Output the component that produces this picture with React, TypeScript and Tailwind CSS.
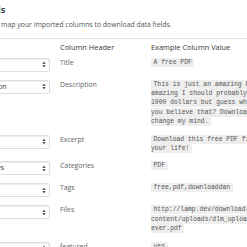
import type { ReactNode } from 'react';

type Row = {
    field: string;
    header: string;
    sample: string[];
};

const rows: Row[] = [
    { field: 'Title', header: 'Title', sample: ['A free PDF'] },
    {
        field: 'Description',
        header: 'Description',
        sample: [
            "This is just an amazing Free PDF, it's so",
            'amazing I should probably charge like',
            "1000 dollars but guess what, it's free! Can",
            'you believe that? Download it before I',
            'change my mind.',
        ],
    },
    { field: 'Excerpt', header: 'Excerpt', sample: ['Download this free PDF file and it will change', 'your life!'] },
    { field: 'Categories', header: 'Categories', sample: ['PDF'] },
    { field: 'Tags', header: 'Tags', sample: ['free,pdf,downloaddan'] },
    {
        field: 'Files',
        header: 'Files',
        sample: ['http://lamp.dev/download-monitor/wp-', 'content/uploads/dlm_uploads/2016/11/what', 'ever.pdf'],
    },
    { field: 'Featured', header: 'featured', sample: ['yes'] },
];

const Arrows = () => (
    <svg width="4" height="7" viewBox="0 0 4 7" className="shrink-0">
        <path d="M0.3 3 L2 0.6 L3.7 3 Z" fill="#555" />
        <path d="M0.3 4 L2 6.4 L3.7 4 Z" fill="#555" />
    </svg>
);

const FieldSelect = ({ value }: { value: string }) => (
    <div className="ml-auto flex h-[14px] w-[85px] items-center justify-between rounded-[2px] border border-[#ddd] bg-white pl-[4px] pr-[3px] text-[6.9px] leading-[12px] text-[#32373c] shadow-[inset_0_1px_1px_rgba(0,0,0,0.07)]">
        <span className="whitespace-nowrap">{value}</span>
        <Arrows />
    </div>
);

const Sample = ({ lines }: { lines: string[] }) => {
    const parts: ReactNode[] = [];
    lines.forEach((line, i) => {
        if (i > 0) parts.push(<br key={'br' + i} />);
        parts.push(line);
    });
    return (
        <div className="whitespace-nowrap font-['Liberation_Mono',monospace] text-[6.4px] leading-[9.4px] text-[#555]">
            <code className="bg-[#eeeeee] px-[2.5px] py-[1px] font-['Liberation_Mono',monospace]">{parts}</code>
        </div>
    );
};

export default function App() {
    return (
        <div className="h-[247px] w-[247px] overflow-hidden bg-white font-['Open_Sans',sans-serif]">
            <div className="-ml-[60px] w-[560px]">
                {/* Page title, clipped on the left */}
                <h2 className="mt-[4px] whitespace-nowrap pl-[16px] text-[9.6px] font-semibold leading-[12px] text-[#23282d]">
                    Map Fields
                </h2>
                <p className="mt-[3.5px] whitespace-nowrap pl-[9px] text-[6.9px] leading-[10px] text-[#555]">
                    The dropdowns map your imported columns to download data fields.
                </p>

                <table className="mt-[8.5px] w-[560px] table-fixed border-t border-[#e1e1e1]">
                    <colgroup>
                        <col className="w-[115px]" />
                        <col className="w-[91px]" />
                        <col />
                    </colgroup>
                    <thead>
                        <tr>
                            <th className="pb-[1.5px] pt-[3px]" />
                            <th className="pb-[1.5px] pl-[5px] pt-[3px] text-left text-[7.4px] font-normal leading-[10px] text-[#32373c]">
                                Column Header
                            </th>
                            <th className="pb-[1.5px] pl-[5px] pt-[3px] text-left text-[7.4px] font-normal leading-[10px] text-[#32373c]">
                                Example Column Value
                            </th>
                        </tr>
                    </thead>
                    <tbody>
                        {rows.map((row) => (
                            <tr key={row.header}>
                                <td className="py-[4px] pr-[5px] align-top">
                                    <FieldSelect value={row.field} />
                                </td>
                                <td className="py-[4px] pl-[5px] align-top text-[6.9px] leading-[9.4px] text-[#666]">
                                    {row.header}
                                </td>
                                <td className="py-[4px] pl-[5px] align-top">
                                    <Sample lines={row.sample} />
                                </td>
                            </tr>
                        ))}
                    </tbody>
                </table>
            </div>
        </div>
    );
}
